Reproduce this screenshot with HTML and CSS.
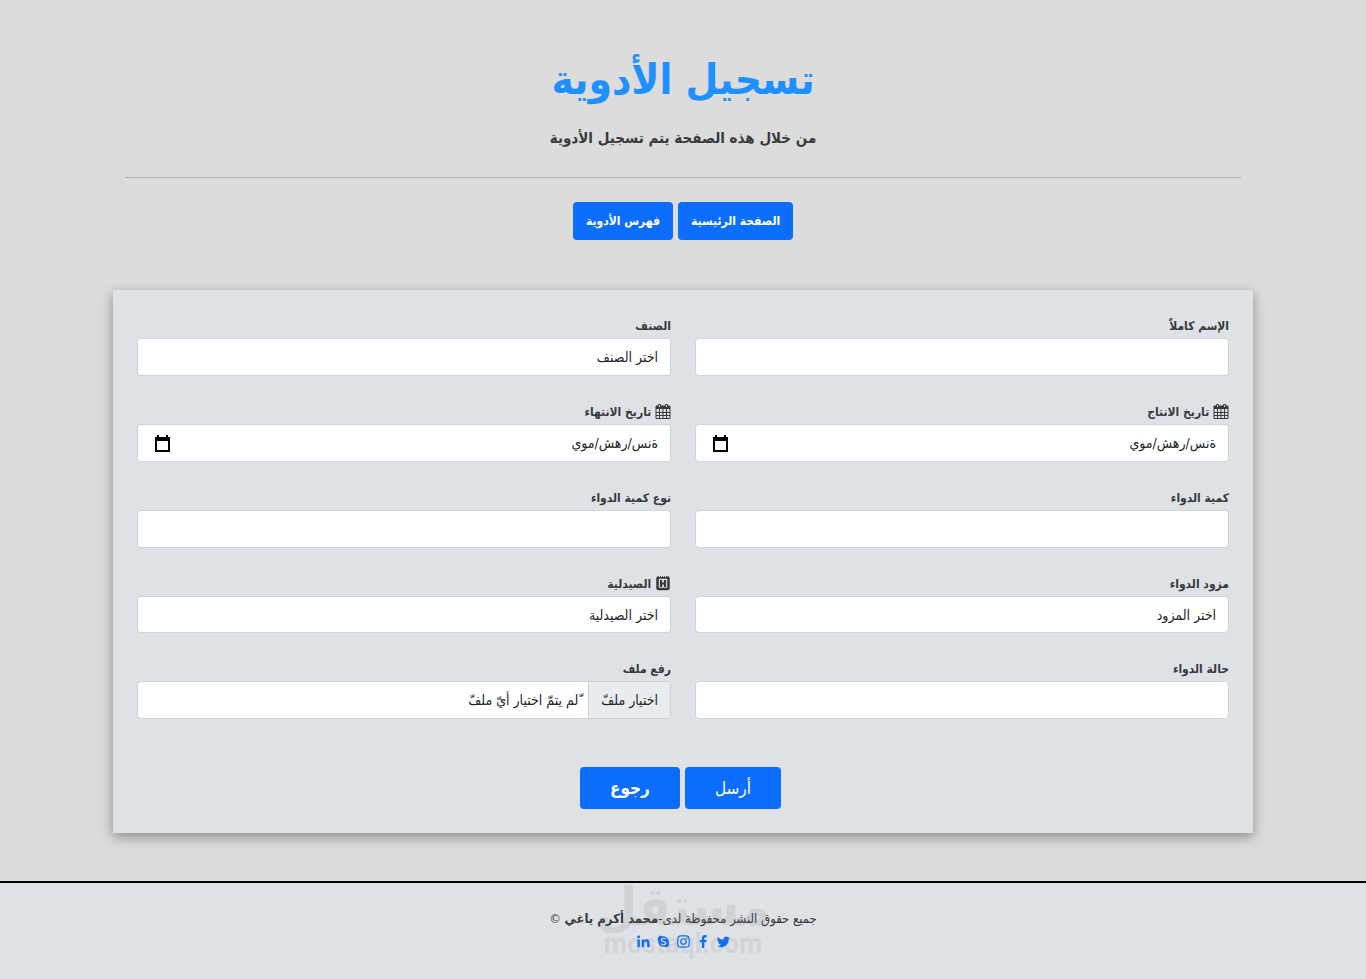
FILE: index.html
```html
<!DOCTYPE html>
<html lang="ar" dir="rtl">
<head>
    <meta charset="UTF-8">
    <meta name="viewport" content="width=device-width, initial-scale=1.0">
    <title>تسجيل الأدوية</title>
    <link rel="stylesheet" href="styles.css">
</head>
<body>
    <header class="container header">
        <h1>تسجيل الأدوية</h1>
        <p class="lead">من خلال هذه الصفحة يتم تسجيل الأدوية</p>
        <hr>
        <nav class="links">
            <a class="btn" href="#">الصفحة الرئيسية</a>
            <a class="btn" href="#">فهرس الأدوية</a>
        </nav>
    </header>

    <form class="container card">
        <div class="grid">
            <div class="field">
                <label for="name">الإسم كاملاً</label>
                <input class="control" type="text" id="name">
            </div>
            <div class="field">
                <label for="category">الصنف</label>
                <select class="control" id="category">
                    <option>اختر الصنف</option>
                </select>
            </div>

            <div class="field">
                <label for="made">
                    <svg class="icon" viewBox="0 0 16 16"><path d="M1 3h14v12.500H1z" fill="none" stroke="currentColor"/><path d="M1 3h14v3H1z" fill="currentColor"/><path d="M4.500 6v9M8 6v9M11.500 6v9M1 9.500h14M1 12.500h14" stroke="currentColor"/><path d="M3.500 4V1.500h2V4M10.500 4V1.500h2V4" fill="#dee2e6" stroke="currentColor"/></svg>
                    تاريخ الانتاج
                </label>
                <div class="control date">
                    <input type="text" id="made" value="ةنس/رهش/موي">
                    <button type="button" class="picker" aria-label="تاريخ الانتاج">
                        <svg viewBox="0 0 15 17"><path d="M1 3h13v13H1z" fill="none" stroke="#000" stroke-width="2"/><path d="M0 2h15v4H0zM2 0h2v3H2zM11 0h2v3h-2z"/></svg>
                    </button>
                </div>
            </div>
            <div class="field">
                <label for="expires">
                    <svg class="icon" viewBox="0 0 16 16"><path d="M1 3h14v12.500H1z" fill="none" stroke="currentColor"/><path d="M1 3h14v3H1z" fill="currentColor"/><path d="M4.500 6v9M8 6v9M11.500 6v9M1 9.500h14M1 12.500h14" stroke="currentColor"/><path d="M3.500 4V1.500h2V4M10.500 4V1.500h2V4" fill="#dee2e6" stroke="currentColor"/></svg>
                    تاريخ الانتهاء
                </label>
                <div class="control date">
                    <input type="text" id="expires" value="ةنس/رهش/موي">
                    <button type="button" class="picker" aria-label="تاريخ الانتهاء">
                        <svg viewBox="0 0 15 17"><path d="M1 3h13v13H1z" fill="none" stroke="#000" stroke-width="2"/><path d="M0 2h15v4H0zM2 0h2v3H2zM11 0h2v3h-2z"/></svg>
                    </button>
                </div>
            </div>

            <div class="field">
                <label for="amount">كمية الدواء</label>
                <input class="control" type="text" id="amount">
            </div>
            <div class="field">
                <label for="unit">نوع كمية الدواء</label>
                <input class="control" type="text" id="unit">
            </div>

            <div class="field">
                <label for="supplier">مزود الدواء</label>
                <select class="control" id="supplier">
                    <option>اختر المزود</option>
                </select>
            </div>
            <div class="field">
                <label for="pharmacy">
                    <svg class="icon" viewBox="0 0 16 16"><rect x="2.500" y="2.500" width="11" height="11.500" rx="1" fill="none" stroke="currentColor" stroke-width="2.500"/><path d="M4 1.500h8" stroke="#dee2e6" stroke-dasharray="1 1"/><path d="M6 5v7M10 5v7M6 8.500h4" stroke="currentColor" stroke-width="2.200"/></svg>
                    الصيدلية
                </label>
                <select class="control" id="pharmacy">
                    <option>اختر الصيدلية</option>
                </select>
            </div>

            <div class="field">
                <label for="state">حالة الدواء</label>
                <input class="control" type="text" id="state">
            </div>
            <div class="field">
                <label for="file">رفع ملف</label>
                <input class="hidden" type="file" id="file">
                <label class="control file" for="file">
                    <span class="choose">اختيار ملفّ</span>
                    <span class="chosen">ّلم يتمّ اختيار أيّ ملفّ</span>
                </label>
            </div>
        </div>

        <div class="actions">
            <button type="submit" class="btn large send">أرسل</button>
            <button type="button" class="btn large">رجوع</button>
        </div>
    </form>

    <footer class="footer">
        <p>جميع حقوق النشر محفوظة لدى-<b>محمد أكرم ياغي</b> ©</p>
        <div class="social">
            <a href="#" aria-label="Twitter"><svg viewBox="0 0 16 16"><path d="M5 15c6 0 9.300-5 9.300-9.300v-.4A6.700 6.700 0 0 0 16 3.500a6.500 6.500 0 0 1-1.900.5 3.300 3.300 0 0 0 1.400-1.800 6.500 6.500 0 0 1-2 .8A3.300 3.300 0 0 0 7.900 6 9.300 9.300 0 0 1 1.100 2.600a3.300 3.300 0 0 0 1 4.400 3.200 3.200 0 0 1-1.500-.4 3.300 3.300 0 0 0 2.600 3.200 3.200 3.200 0 0 1-1.500.1 3.300 3.300 0 0 0 3.100 2.200A6.600 6.600 0 0 1 0 13.600 9.300 9.300 0 0 0 5 15"/></svg></a>
            <a href="#" aria-label="Facebook"><svg viewBox="0 0 16 16"><path d="M6 16V9H3.500V6H6V4c0-2.500 1.500-4 3.800-4 1 0 2.200.2 2.200.2v2.500h-1.300C9.500 2.700 9 3.500 9 4.200V6h2.900l-.5 3H9v7z"/></svg></a>
            <a href="#" aria-label="Instagram"><svg viewBox="0 0 16 16"><g fill="none" stroke="currentColor" stroke-width="1.500"><rect x="1" y="1" width="14" height="14" rx="4"/><circle cx="8" cy="8" r="3.400"/></g><circle cx="12.200" cy="3.800" r="1"/></svg></a>
            <a href="#" aria-label="Skype"><svg viewBox="0 0 16 16"><path d="M4.700 1a4 4 0 0 1 2.400.7A6.700 6.700 0 0 1 14.500 9.200 4 4 0 0 1 9 14.500 6.700 6.700 0 0 1 1.500 7 4 4 0 0 1 4.700 1"/><path d="M10.800 5.300C10.200 4.300 9 4 8 4 6.500 4 5.400 4.700 5.400 5.900c0 2.800 5.400 1.400 5.400 4 0 1.300-1.200 2.100-2.800 2.100-1.300 0-2.400-.5-3-1.600" fill="none" stroke="#dee2e6" stroke-width="1.500"/></svg></a>
            <a href="#" aria-label="LinkedIn"><svg viewBox="0 0 16 16"><circle cx="2" cy="2.500" r="1.800"/><path d="M.5 5.500h3V15h-3zM5.800 5.500h2.900v1.300c.6-1 1.600-1.500 3-1.500 2.800 0 3.800 1.700 3.800 4.500V15h-3v-4.700c0-1.400-.4-2.400-1.700-2.400-1.400 0-2 1-2 2.400V15h-3z"/></svg></a>
        </div>
        <div class="mark">
            <span class="mark-ar">مستقل</span>
            <span class="mark-en" dir="ltr">mostaql.com</span>
        </div>
    </footer>
</body>
</html>
```
FILE: styles.css
```css
* {
    box-sizing: border-box;
}

body {
    margin: 0;
    min-height: 100vh;
    display: flex;
    flex-direction: column;
    background-color: gainsboro;
    color: #383a3d;
    font-family: "DejaVu Sans Condensed", "DejaVu Sans", sans-serif;
    font-size: 13px;
    line-height: 24px;
}

.container {
    width: 100%;
    max-width: 1140px;
    margin: 0 auto;
}

.header {
    padding: 50px 12px;
    text-align: center;
}

h1 {
    margin: 0 0 16px;
    color: dodgerblue;
    font-size: 42px;
    line-height: 60px;
}

.lead {
    margin: 0 0 27px;
    font-size: 15px;
    font-weight: bold;
}

hr {
    margin: 0 0 24px;
    border: none;
    border-top: 1px solid #b3b3b3;
}

.links {
    display: flex;
    justify-content: center;
    gap: 5px;
}

.btn {
    padding: 7px 13px;
    border: none;
    border-radius: 4px;
    background-color: #0d6efd;
    color: white;
    font-family: inherit;
    font-size: 12px;
    font-weight: bold;
    line-height: 24px;
    text-decoration: none;
    cursor: pointer;
}

.card {
    padding: 24px;
    background-color: #dee2e6;
    box-shadow: 0 4px 12px rgba(0, 0, 0, 0.37);
}

.grid {
    display: grid;
    grid-template-columns: 1fr 1fr;
    gap: 24px;
}

.field {
    display: flex;
    flex-direction: column;
}

label {
    font-size: 12px;
    font-weight: bold;
}

.icon {
    width: 16px;
    height: 16px;
    vertical-align: text-bottom;
}

.control {
    flex: 1;
    width: 100%;
    min-height: 37px;
    padding: 0 12px;
    border: 1px solid #ced4da;
    border-radius: 4px;
    background-color: white;
    color: #212529;
    font-family: inherit;
    font-size: 14px;
    font-weight: normal;
    appearance: none;
}

input.control,
.date,
.file {
    min-height: 38px;
}

.date {
    display: flex;
    align-items: center;
    padding-left: 17px;
}

.date input {
    flex: 1;
    padding: 0;
    border: none;
    color: inherit;
    font: inherit;
}

.picker {
    padding: 0;
    border: none;
    background: none;
}

.picker svg {
    display: block;
    width: 15px;
    height: 17px;
}

.file {
    display: flex;
    padding: 0;
    overflow: hidden;
    line-height: 36px;
}

.choose {
    padding: 0 12px;
    border-left: 1px solid #ced4da;
    background-color: #e9ecef;
}

.chosen {
    padding: 0 10px;
}

.hidden {
    position: absolute;
    width: 1px;
    height: 1px;
    opacity: 0;
}

.actions {
    display: flex;
    justify-content: center;
    margin-top: 48px;
}

.large {
    margin-right: 5px;
    padding: 6px 30px;
    font-size: 17px;
    line-height: 30px;
}

.send {
    font-weight: normal;
}

.footer {
    position: relative;
    flex: 1;
    margin-top: 48px;
    padding: 24px 0;
    border-top: 2px solid black;
    background-color: #dee2e6;
    text-align: center;
}

.footer p {
    margin: 0;
}

.social {
    display: flex;
    justify-content: center;
    gap: 7px;
    padding-top: 4px;
}

.social a {
    color: #0d6efd;
}

.social svg {
    display: block;
    width: 13px;
    height: 13px;
    fill: currentColor;
}

.mark {
    position: absolute;
    top: 0;
    left: 0;
    right: 0;
    display: flex;
    flex-direction: column;
    align-items: center;
    color: rgba(120, 110, 110, 0.13);
    font-weight: bold;
    pointer-events: none;
}

.mark-ar {
    font-size: 53px;
    line-height: 48px;
}

.mark-en {
    font-family: Roboto, sans-serif;
    font-size: 27px;
    line-height: 26px;
}
```
